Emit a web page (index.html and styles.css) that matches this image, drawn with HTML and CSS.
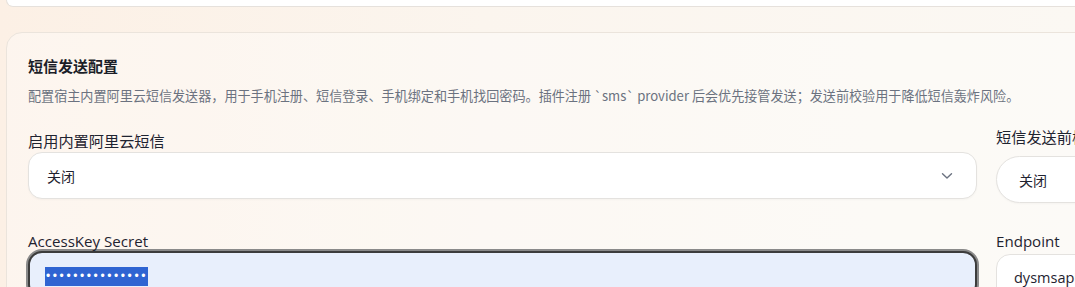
FILE: index.html
```html
<!DOCTYPE html>
<html lang="zh-CN">
<head>
    <meta charset="UTF-8">
    <meta name="viewport" content="width=device-width, initial-scale=1.0">
    <title>短信发送配置</title>
    <link rel="stylesheet" href="styles.css">
</head>
<body>
    <div class="page">
        <div class="card card-prev"></div>

        <div class="card">
            <h2 class="card-title">短信发送配置</h2>
            <p class="card-desc">配置宿主内置阿里云短信发送器，用于手机注册、短信登录、手机绑定和手机找回密码。插件注册 `sms` provider 后会优先接管发送；发送前校验用于降低短信轰炸风险。</p>

            <div class="grid">
                <div class="field">
                    <label class="field-label">启用内置阿里云短信</label>
                    <div class="select">
                        <span>关闭</span>
                        <svg class="chevron" width="12" height="8" viewBox="0 0 12 8">
                            <path d="M1.5 1.8 L6 6 L10.5 1.8" fill="none" stroke="#6b7280" stroke-width="1.4" stroke-linecap="round" stroke-linejoin="round"/>
                        </svg>
                    </div>
                </div>
                <div class="field field-side">
                    <label class="field-label">短信发送前校验</label>
                    <div class="select select-pill">
                        <span>关闭</span>
                    </div>
                </div>

                <div class="field">
                    <label class="field-label latin">AccessKey Secret</label>
                    <div class="input input-focus">
                        <span class="selected">•••••••••••••••</span>
                    </div>
                </div>
                <div class="field field-side2">
                    <label class="field-label latin">Endpoint</label>
                    <div class="input input-plain">dysmsapi.aliyuncs.com</div>
                </div>
            </div>
        </div>
    </div>
</body>
</html>
```

FILE: styles.css
```css
html, body {
    margin: 0;
    height: 100%;
    overflow: hidden;
}
body {
    font-family: "Noto Sans", "Noto Sans CJK SC", sans-serif;
    color: #1f2330;
    background: linear-gradient(90deg, #fcf0e5 0%, #fbf5ee 45%, #fbf8f3 100%);
}
.page {
    width: 1400px;
    padding-left: 6px;
}
.card {
    background: rgba(255, 255, 255, 0.35);
    border: 1px solid #ebe4dc;
    border-radius: 16px;
    padding: 22px 21px 40px;
}
.card-prev {
    height: 6px;
    padding: 0;
    border-top: none;
    border-radius: 0 0 16px 16px;
    background: #ffffff;
    border-color: #e6e1dc;
    margin-bottom: 25px;
}
.card-title {
    margin: 0;
    font-family: "Noto Sans CJK SC", sans-serif;
    font-size: 15px;
    line-height: 22px;
    font-weight: 700;
    color: #1b1e28;
}
.card-desc {
    margin: 9px 0 0;
    font-family: "Noto Sans CJK SC", sans-serif;
    font-size: 13.1px;
    line-height: 20px;
    color: #6b7280;
    white-space: nowrap;
}
.grid {
    display: grid;
    grid-template-columns: 949px 360px;
    column-gap: 19px;
    row-gap: 32px;
    margin-top: 24px;
}
.field-label {
    display: block;
    font-family: "Noto Sans CJK SC", sans-serif;
    font-size: 15.2px;
    line-height: 20px;
    color: #1f2330;
    margin-bottom: 2px;
}
.field-label.latin {
    font-family: "Open Sans", "Noto Sans CJK SC", sans-serif;
    font-size: 15.1px;
}
.field-side {
    margin-top: -4px;
    margin-bottom: -4px;
}
.field-side .field-label {
    margin-bottom: 10px;
}
.field-side2 .field-label {
    margin-bottom: 3px;
}
.select {
    display: flex;
    align-items: center;
    justify-content: space-between;
    box-sizing: border-box;
    height: 47px;
    padding: 0 23px 0 18px;
    background: #ffffff;
    border: 1px solid #e4e2df;
    border-radius: 14px;
    box-shadow: 0 1px 2px rgba(0, 0, 0, 0.03);
    font-family: "Noto Sans CJK SC", sans-serif;
    font-size: 14px;
    color: #1f2330;
}
.select-pill {
    border-radius: 24px;
    padding-left: 22px;
}
.input {
    box-sizing: border-box;
    height: 47px;
    border-radius: 14px;
    display: flex;
    align-items: center;
    font-size: 14.5px;
}
.input-focus {
    margin-top: -2px;
    align-items: flex-start;
    padding: 14px 0 0 15px;
    background: #e8effc;
    border: 2px solid #3c3c3c;
    box-shadow: 0 0 0 2px #8a8a8a;
}
.input-plain {
    background: #ffffff;
    border: 1px solid #e4e2df;
    padding-left: 17px;
    font-family: "Open Sans", sans-serif;
    color: #1f2330;
}
.selected {
    background: #2f64d2;
    color: #ffffff;
    font-family: "Liberation Sans", sans-serif;
    font-size: 12px;
    line-height: 19px;
    letter-spacing: 2.6px;
    padding: 0 0 0 1px;
}
```
